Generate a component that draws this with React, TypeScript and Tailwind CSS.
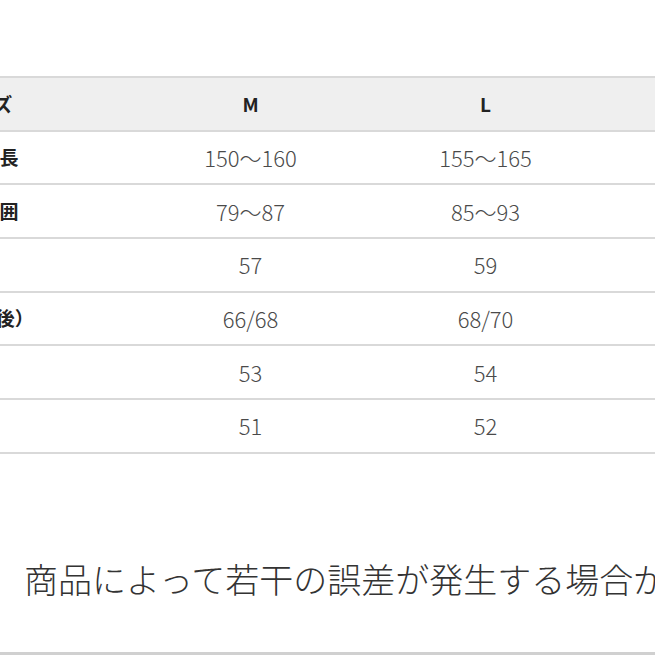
const rows = [
  { label: '適応身長', pad: 'pl-[8px]', m: '150〜160', l: '155〜165' },
  { label: 'バスト周囲', pad: 'pr-[11px]', m: '79〜87', l: '85〜93' },
  { label: '肩幅', pad: '', m: '57', l: '59' },
  { label: '着丈（前/後）', pad: 'pr-[7px]', m: '66/68', l: '68/70' },
  { label: '袖丈', pad: '', m: '53', l: '54' },
  { label: '身幅', pad: '', m: '51', l: '52' },
]

const font = { fontFamily: '"Noto Sans CJK JP", "Noto Sans", sans-serif' }

export default function App() {
  return (
    <div
      className="w-[655px] h-[655px] overflow-hidden bg-white flex flex-col border-b-[3px] border-[#d0d0d0]"
      style={font}
    >
      <div className="mt-[76px] ml-[-180px] flex flex-col border-t-2 border-[#d9d9d9]">
        <div className="flex h-[53.7px] items-center bg-[#efefef] border-b-2 border-[#d9d9d9]">
          <div className="w-[313px] shrink-0 pl-[15px] text-center text-[19px] font-bold text-[#222]">サイズ</div>
          <div className="w-[235px] shrink-0 text-center text-[19px] font-semibold text-[#222]">M</div>
          <div className="w-[235px] shrink-0 text-center text-[19px] font-semibold text-[#222]">L</div>
        </div>
        {rows.map((r) => (
          <div key={r.label} className="flex h-[53.7px] items-center border-b-2 border-[#d9d9d9]">
            <div className={`w-[313px] shrink-0 text-center text-[19px] font-bold text-[#222] whitespace-nowrap ${r.pad}`}>
              {r.label}
            </div>
            <div className="w-[235px] shrink-0 text-center text-[22px] font-light text-[#4a4a4a]">{r.m}</div>
            <div className="w-[235px] shrink-0 text-center text-[22px] font-light text-[#4a4a4a]">{r.l}</div>
          </div>
        ))}
      </div>

      <p className="mt-[99px] whitespace-nowrap text-[34px] leading-[51px] font-light text-[#333]">
        <span className="ml-[-12px] mr-[2px] text-[#aaa]">、</span>
        商品によって若干の誤差が発生する場合があります。
      </p>
    </div>
  )
}
